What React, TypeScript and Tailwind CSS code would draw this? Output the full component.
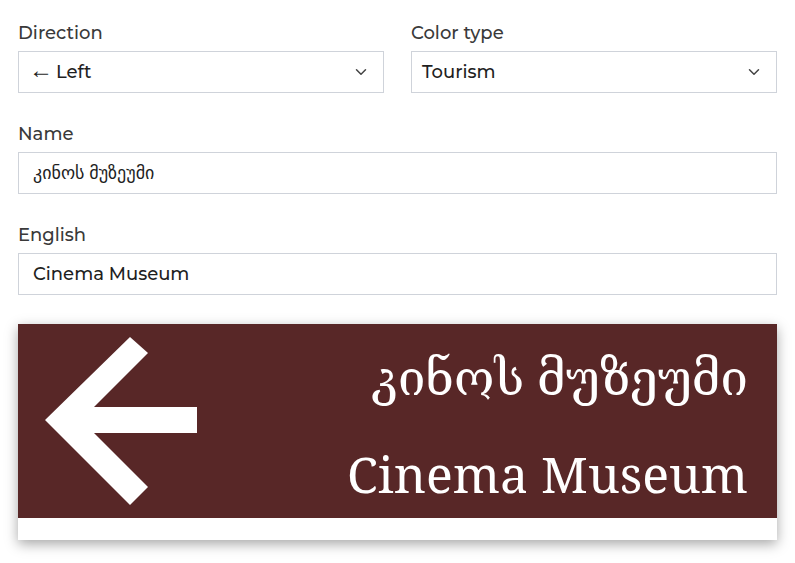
import { ChevronDown } from 'lucide-react';

const sans = "font-['Montserrat','DejaVu_Sans',sans-serif]";

function Label({ children }: { children: string }) {
  return <label className="block text-[18px] leading-[22px] font-medium text-[#3a3a3a] mb-[7px]">{children}</label>;
}

function Select({ value, arrow }: { value: string; arrow?: boolean }) {
  return (
    <div className="h-[42px] border border-[#cfd3da] bg-white flex items-center justify-between pl-[10px] pr-[13px]">
      <span className="text-[18px] font-medium text-[#1f1f1f] flex items-center">
        {arrow && <span className="font-['Liberation_Sans',sans-serif] text-[24px] font-normal mr-[3px] leading-none pb-[5px]">←</span>}
        {value}
      </span>
      <ChevronDown className="w-[18px] h-[18px] text-[#444]" strokeWidth={2} />
    </div>
  );
}

function Input({ value }: { value: string }) {
  return (
    <div className="h-[42px] border border-[#cfd3da] bg-white flex items-center pl-[14px]">
      <span className="text-[18px] font-medium text-[#1f1f1f]">{value}</span>
    </div>
  );
}

export default function App() {
  return (
    <div className={`min-h-screen bg-white ${sans} px-[18px] pt-[22px] w-[795px]`}>
      {/* Direction / Color type */}
      <div className="grid grid-cols-2 gap-[27px]">
        <div>
          <Label>Direction</Label>
          <Select value="Left" arrow />
        </div>
        <div>
          <Label>Color type</Label>
          <Select value="Tourism" />
        </div>
      </div>

      <div className="mt-[30px]">
        <Label>Name</Label>
        <Input value="კინოს მუზეუმი" />
      </div>

      <div className="mt-[30px]">
        <Label>English</Label>
        <Input value="Cinema Museum" />
      </div>

      {/* Sign preview */}
      <div className="mt-[29px] w-[759px] shadow-[0_4px_12px_rgba(0,0,0,0.35)]">
        <div className="h-[194px] bg-[#582727] flex items-stretch">
          <svg viewBox="0 0 180 194" className="w-[180px] h-[194px] shrink-0">
            <polygon
              fill="#fff"
              points="27,96 112,13 130,29 76,83 179,83 179,109 76,109 130,163 112,181"
            />
          </svg>
          <div className="flex-1 flex flex-col items-end pr-[29px] pt-[22px] font-['Noto_Serif','DejaVu_Serif',serif] text-white">
            <div className="text-[49px] leading-[60px]">კინოს მუზეუმი</div>
            <div className="text-[50px] leading-[70px] mt-[33px]">Cinema Museum</div>
          </div>
        </div>
        <div className="h-[22px] bg-white" />
      </div>
    </div>
  );
}
